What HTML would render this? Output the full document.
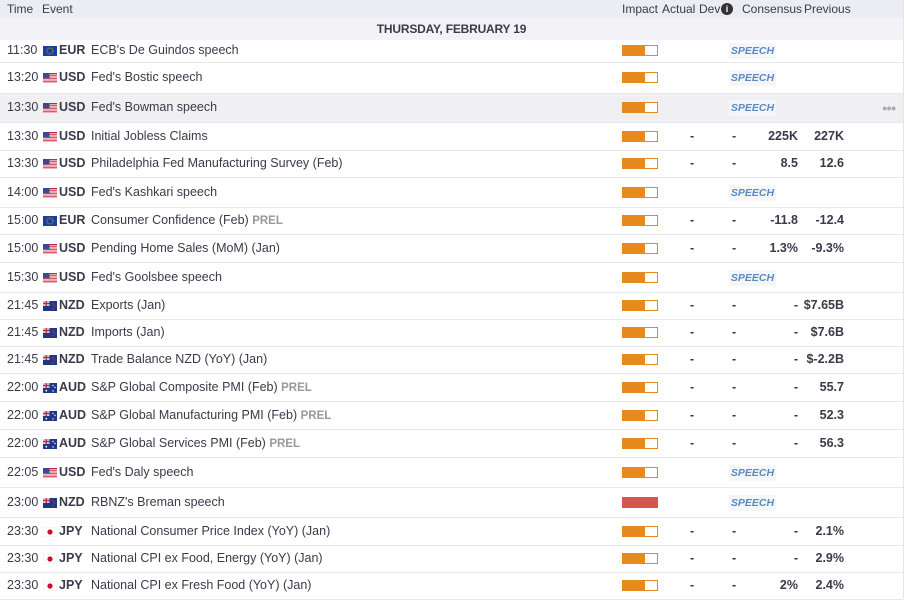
<!DOCTYPE html>
<html><head><meta charset="utf-8"><style>
body{margin:0;width:906px;height:599px;overflow:hidden;background:#fff;font-family:"Liberation Sans",sans-serif;color:#3a3a4a;position:relative}
.hd{position:absolute;left:0;top:0;width:903px;height:18px;background:#ecedf2;font-size:12px}
.hd span{position:absolute;top:2px}
.date{position:absolute;left:0;top:18px;width:903px;height:22px;background:#f3f3f7;font-size:12px;font-weight:bold;text-align:center;line-height:23px;color:#3a3a4a;letter-spacing:-0.2px}
.vr{position:absolute;left:903px;top:0;width:1px;height:599px;background:#e6e6ea}
.r{position:absolute;left:0;width:903px;border-bottom:1px solid #e8e8ec;font-size:12.5px}
.r span{position:absolute}
.t{left:7px}.c{left:59px;font-weight:bold}.e{left:91px}
.p{color:#999;font-weight:bold;font-size:11.5px}
.f{position:absolute;left:43px;width:14px;height:10px}
.imp{position:absolute;left:622px;width:34px;height:9px;border:1px solid #e68a1e;background:linear-gradient(90deg,#e68a1e 0,#e68a1e 22px,#fff 22px)}
.imp.red{background:#d9534f;border-color:#d9534f}
.sp{position:absolute;left:729px;width:47px;height:16px;background:#f4f6f8;color:#5a8ac0;font-style:italic;font-weight:bold;font-size:10.5px;text-align:center;line-height:16px}
.d1{left:690px;font-weight:bold}.d2{left:732px;font-weight:bold}
.cs{right:105px;font-weight:bold}.pv{right:59px;font-weight:bold}
</style></head><body>
<div class="hd"><span style="left:7px">Time</span><span style="left:42px">Event</span><span style="left:622px">Impact</span><span style="left:662px">Actual</span><span style="left:699px">Dev</span><span style="left:721px;top:3px;width:12px;height:12px;border-radius:50%;background:#333;color:#fff;font-size:9px;font-weight:bold;text-align:center;line-height:12px">i</span><span style="left:742px">Consensus</span><span style="left:804px">Previous</span></div>
<div class="date">THURSDAY, FEBRUARY 19</div>
<div class="vr"></div>
<div id="rows"></div>
<script>
var EU='<svg class="f" viewBox="0 0 14 10"><rect width="14" height="10" fill="#1b3f9c"/><circle cx="7" cy="5" r="3" fill="none" stroke="#f5c400" stroke-width="0.8" stroke-dasharray="0.8 0.8"/></svg>';
var US='<svg class="f" viewBox="0 0 14 10"><rect width="14" height="10" fill="#c8283c"/><g fill="#fff"><rect y="1.4" width="14" height="0.75"/><rect y="2.9" width="14" height="0.75"/><rect y="4.4" width="14" height="0.75"/><rect y="5.9" width="14" height="0.75"/><rect y="7.4" width="14" height="0.75"/><rect y="8.9" width="14" height="0.75"/></g><rect width="6.5" height="5.3" fill="#3b4a8c"/></svg>';
var NZ='<svg class="f" viewBox="0 0 14 10"><rect width="14" height="10" fill="#1f3784"/><rect width="6.5" height="5" fill="#c8c8dd"/><path d="M0 2.5H6.5M3.25 0V5" stroke="#c0283c" stroke-width="1.2"/><g fill="#d33"><circle cx="10" cy="3" r=".7"/><circle cx="11.5" cy="5" r=".7"/><circle cx="10" cy="7.8" r=".7"/></g></svg>';
var AU='<svg class="f" viewBox="0 0 14 10"><rect width="14" height="10" fill="#1f3784"/><rect width="6.5" height="5" fill="#c8c8dd"/><path d="M0 2.5H6.5M3.25 0V5" stroke="#c0283c" stroke-width="1.2"/><g fill="#fff"><circle cx="10" cy="2.5" r=".7"/><circle cx="12" cy="4.5" r=".7"/><circle cx="10" cy="8" r=".7"/><circle cx="3.3" cy="7.7" r=".9"/></g></svg>';
var JP='<svg class="f" viewBox="0 0 14 10"><rect width="14" height="10" fill="#fff" stroke="#e4e4e4" stroke-width=".6"/><circle cx="7" cy="5" r="2.6" fill="#c8102e"/></svg>';
var F={EUR:EU,USD:US,NZD:NZ,AUD:AU,JPY:JP};
var R=[
[40,63,'11:30','EUR',"ECB's De Guindos speech",'S'],
[63,94,'13:20','USD',"Fed's Bostic speech",'S'],
[94,123,'13:30','USD',"Fed's Bowman speech",'S',0,0,0,1],
[123,151,'13:30','USD','Initial Jobless Claims','','225K','227K'],
[151,178,'13:30','USD','Philadelphia Fed Manufacturing Survey (Feb)','','8.5','12.6'],
[178,208,'14:00','USD',"Fed's Kashkari speech",'S'],
[208,235,'15:00','EUR','Consumer Confidence (Feb) <b class="p">PREL</b>','','-11.8','-12.4'],
[235,263,'15:00','USD','Pending Home Sales (MoM) (Jan)','','1.3%','-9.3%'],
[263,293,'15:30','USD',"Fed's Goolsbee speech",'S'],
[293,320,'21:45','NZD','Exports (Jan)','','-','$7.65B'],
[320,347,'21:45','NZD','Imports (Jan)','','-','$7.6B'],
[347,374,'21:45','NZD','Trade Balance NZD (YoY) (Jan)','','-','$-2.2B'],
[374,402,'22:00','AUD','S&amp;P Global Composite PMI (Feb) <b class="p">PREL</b>','','-','55.7'],
[402,430,'22:00','AUD','S&amp;P Global Manufacturing PMI (Feb) <b class="p">PREL</b>','','-','52.3'],
[430,458,'22:00','AUD','S&amp;P Global Services PMI (Feb) <b class="p">PREL</b>','','-','56.3'],
[458,488,'22:05','USD',"Fed's Daly speech",'S'],
[488,518,'23:00','NZD',"RBNZ's Breman speech",'SR'],
[518,546,'23:30','JPY','National Consumer Price Index (YoY) (Jan)','','-','2.1%'],
[546,573,'23:30','JPY','National CPI ex Food, Energy (YoY) (Jan)','','-','2.9%'],
[573,600,'23:30','JPY','National CPI ex Fresh Food (YoY) (Jan)','','2%','2.4%']];
var h='';
R.forEach(function(x){var H=x[1]-x[0]-1,m=Math.round(H/2);
var ty=m-8,fy=m-5;
h+='<div class="r" style="top:'+x[0]+'px;height:'+H+'px;'+(x[9]?'background:#f0f0f2':'')+'">';
h+='<span class="t" style="top:'+ty+'px">'+x[2]+'</span>'+F[x[3]].replace('class="f"','class="f" style="top:'+fy+'px"')+'<span class="c" style="top:'+ty+'px">'+x[3]+'</span><span class="e" style="top:'+ty+'px">'+x[4]+'</span>';
h+='<div class="imp'+(x[5]=='SR'?' red':'')+'" style="top:'+(m-6)+'px"></div>';
if(x[5][0]=='S')h+='<div class="sp" style="top:'+(m-8)+'px">SPEECH</div>';
else h+='<span class="d1" style="top:'+ty+'px">-</span><span class="d2" style="top:'+ty+'px">-</span><span class="cs" style="top:'+ty+'px">'+x[6]+'</span><span class="pv" style="top:'+ty+'px">'+x[7]+'</span>';
if(x[9])h+='<span style="left:882px;top:'+(ty+3)+'px;color:#aaa;font-size:9px;letter-spacing:-1px">●●●</span>';
h+='</div>';});
document.getElementById('rows').innerHTML=h;
</script>
</body></html>
